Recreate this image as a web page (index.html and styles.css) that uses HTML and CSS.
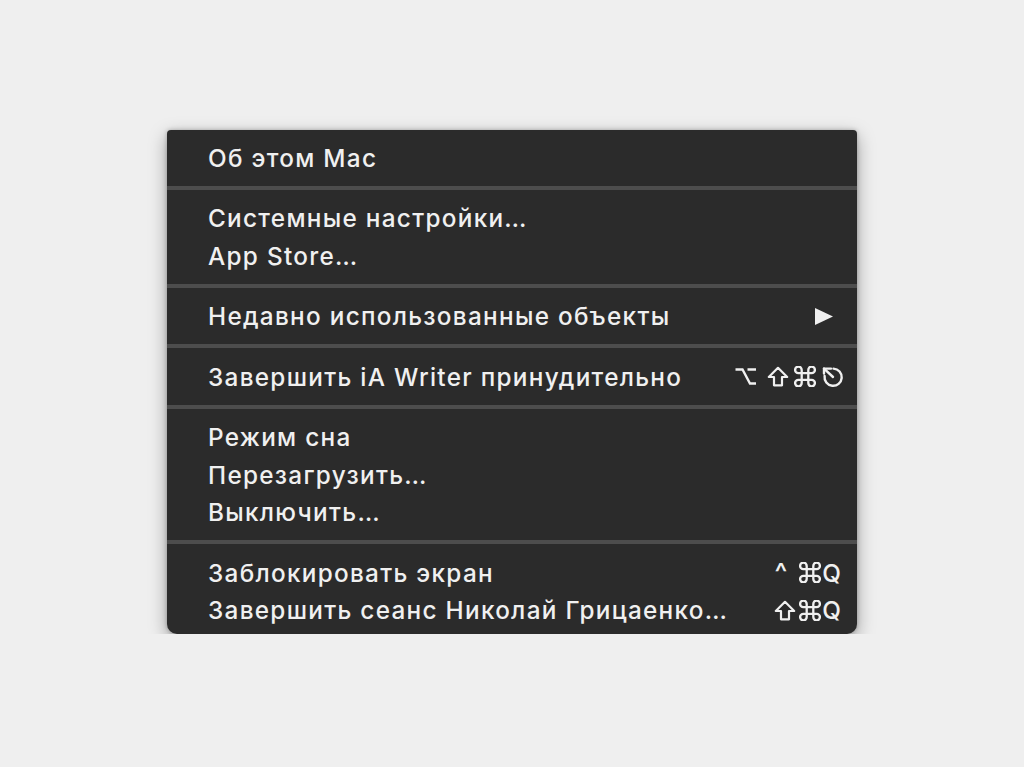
FILE: index.html
```html
<!DOCTYPE html>
<html lang="ru">
<head>
<meta charset="utf-8">
<title>Меню Apple</title>
<link rel="stylesheet" href="styles.css">
</head>
<body>
<div class="menu">
  <div class="item"><span class="label">Об этом Mac</span></div>
  <div class="sep"></div>
  <div class="item"><span class="label">Системные настройки…</span></div>
  <div class="item"><span class="label">App Store…</span></div>
  <div class="sep"></div>
  <div class="item arrow-item">
    <span class="label">Недавно использованные объекты</span>
    <svg class="arrow" width="18" height="17" viewBox="0 0 18 17"><polygon points="0,0 18,8.5 0,17" fill="#f0f0f0"/></svg>
  </div>
  <div class="sep"></div>
  <div class="item">
    <span class="label">Завершить iA Writer принудительно</span>
    <span class="keys">
      <svg class="key opt" width="22" height="21" viewBox="0 0 22 21"><path d="M0.5 3.5 H7.5 L15 17.5 H21 M12.5 3.5 H21" fill="none" stroke="#f0f0f0" stroke-width="2.4"/></svg>
      <svg class="key shift" width="22" height="21" viewBox="0 0 22 21"><polygon points="11,1.8 20.2,11 15,11 15,19.3 7,19.3 7,11 1.8,11" fill="none" stroke="#f0f0f0" stroke-width="2.2" stroke-linejoin="round"/></svg>
      <svg class="key cmd" width="22" height="21" viewBox="2 2.5 20 19"><path d="M15 6v12a3 3 0 1 0 3-3H6a3 3 0 1 0 3 3V6a3 3 0 1 0-3 3h12a3 3 0 1 0-3-3" fill="none" stroke="#f0f0f0" stroke-width="2.1"/></svg>
      <svg class="key esc" width="23" height="22" viewBox="0 0 23 22"><g fill="none" stroke="#f0f0f0" stroke-width="2.4" stroke-linecap="round" stroke-linejoin="round"><path d="M12.5 2.6 A8.6 8.6 0 1 1 3.6 10"/><path d="M12 11 L3 2.6"/><path d="M3 2.6 H10 M3 2.6 V7.5"/></g></svg>
    </span>
  </div>
  <div class="sep"></div>
  <div class="item"><span class="label">Режим сна</span></div>
  <div class="item"><span class="label">Перезагрузить…</span></div>
  <div class="item"><span class="label">Выключить…</span></div>
  <div class="sep"></div>
  <div class="item">
    <span class="label">Заблокировать экран</span>
    <span class="keys"><span class="caret">^</span><svg class="key cmd" width="22" height="21" viewBox="2 2.5 20 19"><path d="M15 6v12a3 3 0 1 0 3-3H6a3 3 0 1 0 3 3V6a3 3 0 1 0-3 3h12a3 3 0 1 0-3-3" fill="none" stroke="#f0f0f0" stroke-width="2.1"/></svg><span class="q">Q</span></span>
  </div>
  <div class="item">
    <span class="label">Завершить сеанс Николай Грицаенко…</span>
    <span class="keys"><svg class="key shift" width="22" height="21" viewBox="0 0 22 21"><polygon points="11,1.8 20.2,11 15,11 15,19.3 7,19.3 7,11 1.8,11" fill="none" stroke="#f0f0f0" stroke-width="2.2" stroke-linejoin="round"/></svg><svg class="key cmd wide" width="22" height="21" viewBox="2 2.5 20 19"><path d="M15 6v12a3 3 0 1 0 3-3H6a3 3 0 1 0 3 3V6a3 3 0 1 0-3 3h12a3 3 0 1 0-3-3" fill="none" stroke="#f0f0f0" stroke-width="2.1"/></svg><span class="q">Q</span></span>
  </div>
</div>
</body>
</html>
```

FILE: styles.css
```css
html, body {
  margin: 0;
  padding: 0;
}
body {
  background: #efefef;
  padding-top: 130px;
  padding-left: 167px;
  font-family: "Inter", "Liberation Sans", sans-serif;
}
.menu {
  width: 690px;
  box-sizing: border-box;
  background: #2b2b2b;
  border-radius: 4px 4px 10px 10px;
  padding: 9px 0 5px;
  box-shadow: 0 6px 18px rgba(0, 0, 0, 0.35), 0 0 4px rgba(0, 0, 0, 0.25);
  color: #f0f0f0;
}
.item {
  height: 37.5px;
  display: flex;
  align-items: center;
  justify-content: space-between;
  padding: 0 13px 0 41px;
  font-size: 24.3px;
  font-weight: 500;
  letter-spacing: 1.3px;
  white-space: nowrap;
}
.arrow-item {
  padding-right: 24px;
}
.sep {
  height: 4px;
  background: #4d4d4d;
  margin: 9px 0 10px;
}
.keys {
  display: flex;
  align-items: center;
  letter-spacing: 0;
}
.key {
  display: block;
}
.key.shift {
  margin-left: 10px;
}
.keys .key:first-child {
  margin-left: 0;
}
.key.cmd {
  margin-left: 5px;
}
.key.cmd.wide {
  margin-left: 3px;
}
.key.esc {
  margin-left: 5px;
}
.caret {
  margin-right: 7px;
  font-size: 27px;
  line-height: 1;
}
.q {
  margin-left: 1px;
  margin-right: 3px;
}
```
